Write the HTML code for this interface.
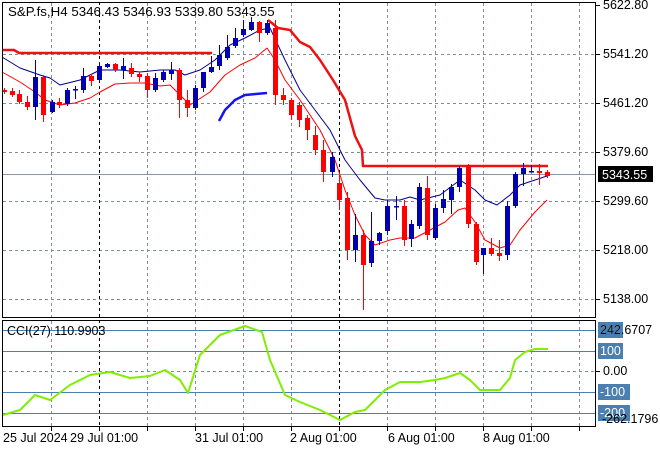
<!DOCTYPE html>
<html><head><meta charset="utf-8"><style>
body{margin:0;background:#fff;}
svg{display:block;font-family:"Liberation Sans",sans-serif;font-size:12.5px;}
</style></head><body>
<svg id="s" width="660" height="450" xmlns="http://www.w3.org/2000/svg">
<rect width="660" height="450" fill="#fff"/>
<g id="grid" stroke="#7f8c99" stroke-dasharray="3,3" fill="none"></g>
<line x1="339.5" y1="2" x2="339.5" y2="426" stroke="#000" stroke-dasharray="3,3"/>
<line x1="99.5" y1="2" x2="99.5" y2="426" stroke="#000" stroke-dasharray="3,3"/>
<line x1="2" y1="174.5" x2="596" y2="174.5" stroke="#8898a8"/>
<g id="ind" fill="none"></g>
<g id="candles"></g>
<rect x="2.5" y="2.5" width="593" height="315" fill="none" stroke="#000"/>
<rect x="2.5" y="320.5" width="593" height="106" fill="none" stroke="#000"/>
<text x="8" y="16" fill="#000" style="font-size:13.3px">S&amp;P.fs,H4  5346.43 5346.93 5339.80 5343.55</text>
<g id="ax" fill="#000"></g>
</svg>
<script>
const NS="http://www.w3.org/2000/svg";
function el(p,t,a,txt){const e=document.createElementNS(NS,t);for(const k in a)e.setAttribute(k,a[k]);if(txt!==undefined)e.textContent=txt;document.getElementById(p).appendChild(e);return e;}
[51,147,195,243,291,387,435,483,531,579].forEach(x=>{el('grid','line',{x1:x+.5,y1:3,x2:x+.5,y2:317});el('grid','line',{x1:x+.5,y1:321,x2:x+.5,y2:426});});
[54,103,152,201,250,299].forEach(y=>el('grid','line',{x1:3,y1:y+.5,x2:595,y2:y+.5}));
el('grid','line',{x1:3,y1:371.5,x2:595,y2:371.5});
[330,351,392,413].forEach(y=>el('ind','line',{x1:3,y1:y+.5,x2:595,y2:y+.5,stroke:'#4a7fb0'}));
function pl(pts,c,w){el('ind','polyline',{points:pts.map(p=>p.join(',')).join(' '),stroke:c,'stroke-width':w,'stroke-linejoin':'round'});}
pl([[2,57],[20,68],[40,75],[50,78],[60,85],[80,80],[100,70],[120,70],[140,72],[160,70],[175,70],[185,75],[200,70],[215,60],[230,45],[245,38],[260,30],[270,28],[285,60],[300,90],[315,110],[330,130],[345,160],[360,180],[375,198],[385,200],[400,200],[410,197],[420,200],[440,195],[460,180],[475,190],[485,200],[497,205],[510,195],[520,185],[535,180],[547,176]],'#00008b',1);
pl([[2,72],[20,82],[35,92],[45,100],[60,105],[75,103],[90,98],[100,92],[115,84],[130,83],[145,83],[160,86],[170,85],[180,95],[190,105],[210,92],[225,75],[240,65],[255,58],[267,48],[275,60],[285,80],[300,100],[320,130],[335,160],[345,190],[355,215],[365,235],[375,245],[390,240],[400,238],[415,238],[430,230],[445,222],[458,210],[465,208],[475,222],[485,240],[500,248],[510,245],[520,230],[535,212],[547,200]],'#ff0000',1);
pl([[2,50],[14,50],[19,53],[212,53]],'#ee1111',2.5);
pl([[268,20],[278,28],[290,30],[300,42],[310,47],[320,60],[333,80],[345,100],[355,136],[362,150],[363,166],[548,166]],'#ee1111',2.5);
pl([[219,121],[225,110],[235,100],[245,95],[267,93]],'#1515ee',2.5);
pl([[3,415],[20,410],[35,395],[50,400],[70,385],[90,375],[110,372],[130,378],[150,376],[165,370],[180,380],[188,393],[200,355],[220,335],[245,326],[262,332],[270,360],[285,395],[300,402],[320,410],[340,420],[355,412],[365,410],[375,400],[385,390],[400,382],[420,382],[435,380],[445,378],[460,373],[470,380],[480,390],[500,390],[510,378],[515,360],[525,352],[535,349],[548,349]],'#7fee00',2);
const C=[[4,90,92,88,94],[12,91,95,88,97],[19,94,102,90,104],[27,102,107,96,110],[35,107,77,60,120],[43,77,115,75,122],[52,112,102,100,113],[59,102,105,98,108],[67,104,90,88,106],[75,90,89,86,99],[83,90,76,68,93],[91,76,81,74,86],[99,80,66,62,82],[107,67,64,63,68],[115,64,70,63,72],[123,70,66,58,79],[131,68,74,63,77],[139,74,77,72,82],[147,76,90,73,98],[155,90,78,73,92],[163,80,72,70,82],[171,74,70,62,80],[179,70,100,68,118],[187,100,108,90,117],[195,108,88,85,110],[203,88,72,72,92],[211,72,67,56,73],[219,66,55,45,70],[227,58,47,35,60],[235,46,38,28,48],[243,35,29,20,37],[251,30,22,17,31],[259,22,33,21,42],[267,33,23,20,35],[275,28,95,20,105],[283,95,100,88,105],[291,100,115,98,120],[299,105,120,102,127],[307,118,130,115,140],[315,135,150,126,155],[323,150,172,140,182],[332,172,157,152,177],[339,183,200,175,210],[347,198,250,192,260],[355,250,235,214,262],[363,235,265,230,310],[371,263,241,212,267],[379,241,233,232,245],[387,231,206,200,235],[396,206,206,196,220],[404,206,240,200,246],[411,239,224,220,247],[419,226,187,183,229],[427,188,235,176,240],[435,238,208,204,240],[443,208,199,190,213],[451,200,187,184,214],[459,187,168,166,192],[468,166,224,164,228],[476,224,262,222,265],[483,255,248,248,274],[491,248,254,238,256],[499,253,256,240,261],[507,255,206,201,260],[515,206,174,172,208],[523,174,168,163,186],[531,172,171,165,172],[539,171,173,164,185],[547,172,176,170,178]];
C.forEach(([x,o,c,h,l])=>{const col=c>o?'#ff0000':'#0000b0';
el('candles','line',{x1:x+.5,y1:h,x2:x+.5,y2:l,stroke:col});
const t=Math.min(o,c),b=Math.max(o,c);el('candles','rect',{x:x-2,y:t,width:5,height:Math.max(b-t,1.5),fill:col});});
[[5,'5622.80'],[54,'5541.20'],[103,'5461.20'],[152,'5379.60'],[201,'5299.60'],[250,'5218.00'],[299,'5138.00'],[371,'0.00']].forEach(([y,t])=>{el('ax','line',{x1:596,y1:y+.5,x2:600,y2:y+.5,stroke:'#000'});el('ax','text',{x:603,y:y+4},t);});
el('ax','rect',{x:598,y:166,width:55,height:16,fill:'#000'});el('ax','text',{x:602,y:179,fill:'#fff'},'5343.55');
[[330,'242'],[351,'100'],[392,'-100'],[413,'-200']].forEach(([y,t])=>{el('ax','rect',{x:598,y:y-8,width:t.length*7+4,height:16,fill:'#4a7fb0'});el('ax','text',{x:600,y:y+4,fill:'#fff'},t);});
el('ax','text',{x:600,y:334},'242.6707');el('ax','text',{x:602,y:423},'-262.1796');
el('ax','text',{x:7,y:335},'CCI(27) 110.9903');
[[3,'25 Jul 2024'],[70,'29 Jul 01:00'],[195,'31 Jul 01:00'],[290,'2 Aug 01:00'],[388,'6 Aug 01:00'],[483,'8 Aug 01:00']].forEach(([x,t])=>{el('ax','text',{x:x,y:442},t);});
[51,99,147,195,243,291,339,387,435,483,531,579].forEach(x=>el('ax','line',{x1:x+.5,y1:426,x2:x+.5,y2:431,stroke:'#000'}));
</script>
</body></html>
